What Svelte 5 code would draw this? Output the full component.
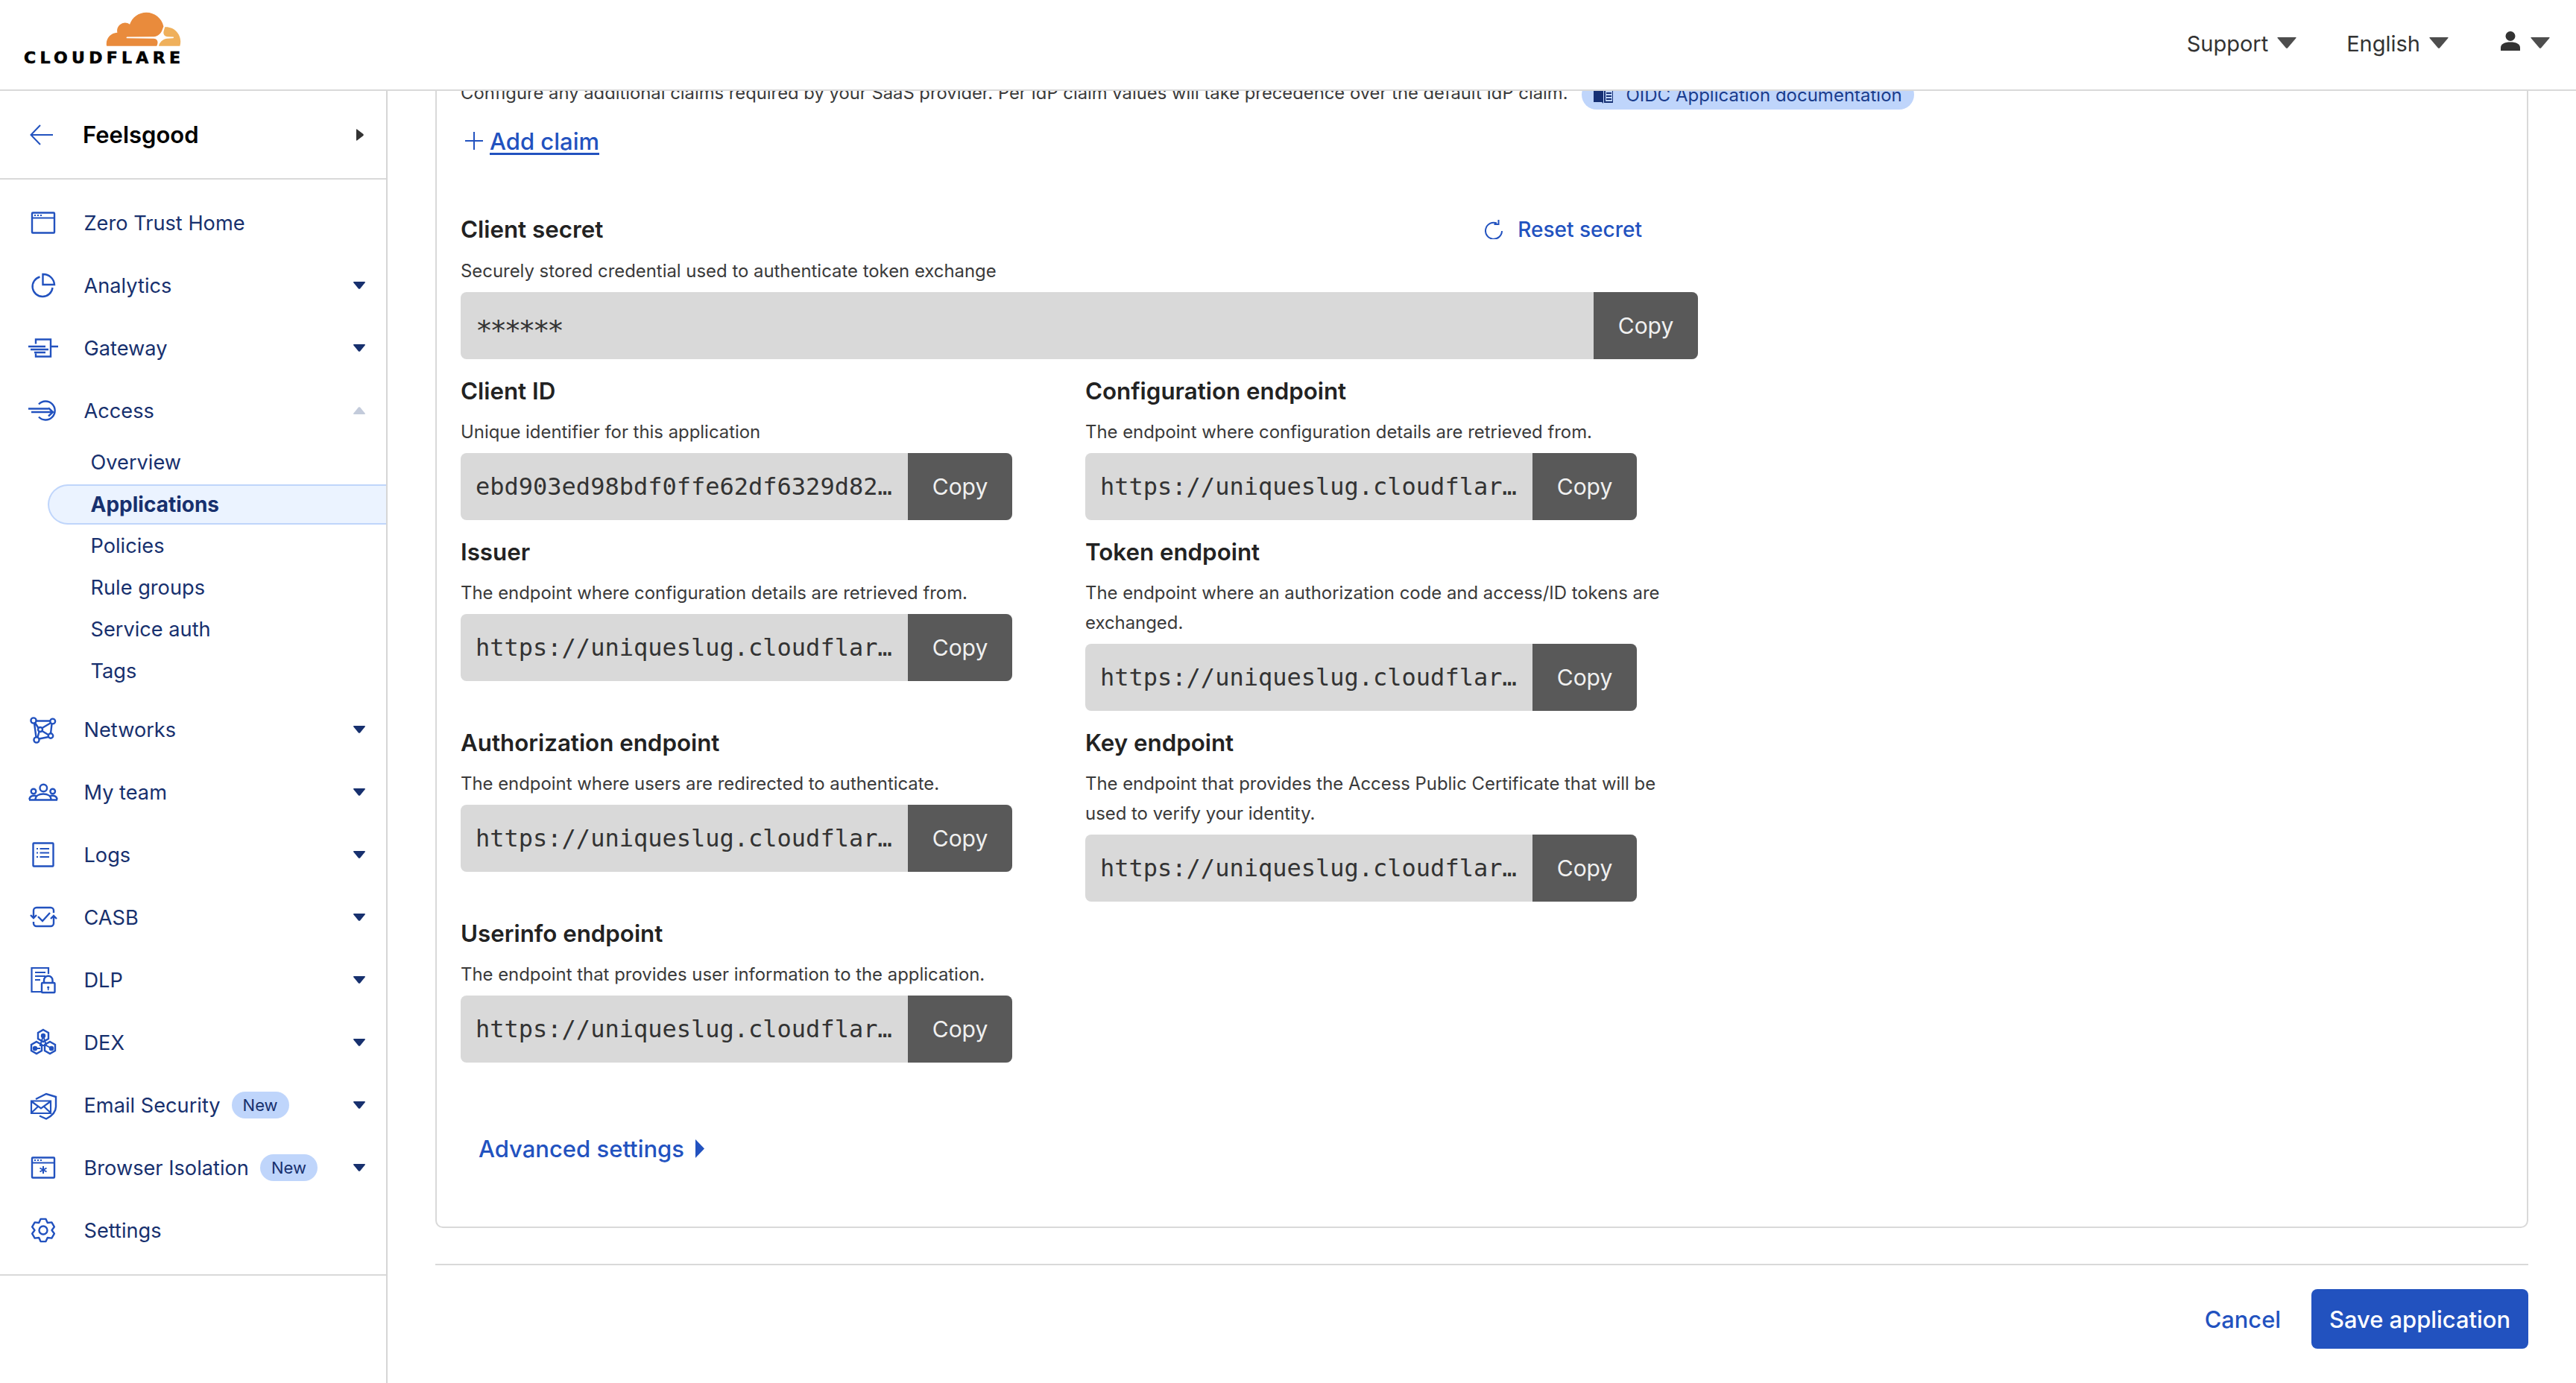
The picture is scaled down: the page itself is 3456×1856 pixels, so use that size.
<script>
  const nav1 = [
    { icon: 'home', label: 'Zero Trust Home' },
    { icon: 'analytics', label: 'Analytics', caret: 'down' },
    { icon: 'gateway', label: 'Gateway', caret: 'down' },
    { icon: 'access', label: 'Access', caret: 'up' }
  ];
  const subs = ['Overview', 'Applications', 'Policies', 'Rule groups', 'Service auth', 'Tags'];
  const nav2 = [
    { icon: 'networks', label: 'Networks', caret: 'down' },
    { icon: 'team', label: 'My team', caret: 'down' },
    { icon: 'logs', label: 'Logs', caret: 'down' },
    { icon: 'casb', label: 'CASB', caret: 'down' },
    { icon: 'dlp', label: 'DLP', caret: 'down' },
    { icon: 'dex', label: 'DEX', caret: 'down' },
    { icon: 'email', label: 'Email Security', caret: 'down', badge: 'New' },
    { icon: 'browser', label: 'Browser Isolation', caret: 'down', badge: 'New' },
    { icon: 'settings', label: 'Settings' }
  ];
  const url = 'https://uniqueslug.cloudflareaccess.com/cdn-cgi/access/sso/oidc/ebd903ed98bdf0ffe62df6329d82';
  const fields = [
    { label: 'Client ID', desc: 'Unique identifier for this application', value: 'ebd903ed98bdf0ffe62df6329d82e1f4a7c05b36d91e2f8c' },
    { label: 'Configuration endpoint', desc: 'The endpoint where configuration details are retrieved from.', value: url },
    { label: 'Issuer', desc: 'The endpoint where configuration details are retrieved from.', value: url },
    { label: 'Token endpoint', desc: 'The endpoint where an authorization code and access/ID tokens are exchanged.', value: url },
    { label: 'Authorization endpoint', desc: 'The endpoint where users are redirected to authenticate.', value: url },
    { label: 'Key endpoint', desc: 'The endpoint that provides the Access Public Certificate that will be used to verify your identity.', value: url },
    { label: 'Userinfo endpoint', desc: 'The endpoint that provides user information to the application.', value: url }
  ];
  function gearPath() {
    const pts = [];
    for (let i = 0; i < 6; i++) {
      const a = (i * 60 * Math.PI) / 180 - Math.PI / 2;
      const d = Math.PI / 180;
      [[11.5, -30], [15.5, -13], [15.5, 13], [11.5, 30]].forEach(([r, o]) => {
        pts.push(`${(20 + r * Math.cos(a + o * d)).toFixed(2)} ${(20 + r * Math.sin(a + o * d)).toFixed(2)}`);
      });
    }
    return 'M' + pts.join(' L') + ' Z';
  }
  const gear = gearPath();
</script>

{#snippet navIcon(name)}
  <svg class="nicon" viewBox="0 0 40 40" width="40" height="40" fill="none" stroke="currentColor" stroke-width="2.4">
    {#if name === 'home'}
      <rect x="5" y="6.5" width="30" height="27" rx="1" />
      <path d="M5 13.5H35M8 10H10M12 10H14M16 10H18" stroke-width="2" />
    {:else if name === 'analytics'}
      <path d="M15.5 8.5A13.5 13.5 0 1 0 32.5 23" />
      <path d="M19.5 5A15 15 0 0 1 35 19H19.5Z" />
    {:else if name === 'gateway'}
      <path d="M10 14.5V8.5H30V31.5H10V27.5M0 18H23M3 22H27M8 26H23M30 18H40" />
    {:else if name === 'access'}
      <path d="M14 11.5A12.5 12.5 0 1 1 14 28.5M0 17.5H27M4 22H33M27 16.5L33 22L27 27.5" />
    {:else if name === 'networks'}
      <path d="M10.5 8.5H29M8 11.5L10.5 30.5M31.5 12.5L30 25.5M14.5 32.5L27 30M9 11L13.5 18M18.5 18L29.5 11.5M18.5 22L27.5 27.5M14.5 23L12.5 30.5" />
      <circle cx="7" cy="8" r="3.6" /><circle cx="32.7" cy="9" r="3.4" /><circle cx="16" cy="20" r="3" /><circle cx="30" cy="28.5" r="3.2" /><circle cx="11" cy="34" r="3.6" />
    {:else if name === 'team'}
      <circle cx="7" cy="19" r="3.3" /><circle cx="20.3" cy="14.5" r="4.8" /><circle cx="32.7" cy="19" r="3.3" />
      <path d="M1 30.5H39M1.5 30C1.5 26 5 24 10.5 25M9.5 30C9.5 25 14 22.5 20 22.5C26 22.5 30.5 25 30.5 30M38.5 30C38.5 26 35 24 29.5 25" />
    {:else if name === 'logs'}
      <rect x="6.5" y="4.5" width="27" height="31" rx="1" />
      <path d="M15.5 12H28M15.5 17.5H28M15.5 23H28M11 12H13M11 17.5H13M11 23H13" stroke-width="2" />
    {:else if name === 'casb'}
      <path d="M7 21V11A4 4 0 0 1 11 7H30A4 4 0 0 1 34 11V14M3 17L7 21L11 17M7 26V28A4 4 0 0 0 11 32H30A4 4 0 0 0 34 28V19M30 22L34 18L38 22M13 19L19 25L29 14" />
    {:else if name === 'dlp'}
      <path d="M17 36H4.5V4H27V12M9 10H23M9 15H23M9 20H16" stroke-width="2.2" />
      <rect x="18" y="24" width="17.5" height="13" rx="1" />
      <path d="M21 24V20.5A5.7 5.7 0 0 1 32.5 20.5V24" />
      <circle cx="26.7" cy="30" r="1.6" fill="currentColor" stroke="none" /><path d="M26.7 30V34" stroke-width="1.6" />
    {:else if name === 'dex'}
      <path d="M20 3L27 7V15L20 19L13 15V7Z" />
      <path d="M11 19L18 23V31L11 35L4 31V23Z" />
      <path d="M29 19L36 23V31L29 35L22 31V23Z" />
      <circle cx="20" cy="11" r="2" fill="currentColor" /><circle cx="9" cy="28" r="2" fill="currentColor" /><circle cx="31" cy="28" r="2" fill="currentColor" />
      <path d="M20 11L16 24H24ZM9 28H16M24 24L31 28" stroke-width="2" />
    {:else if name === 'email'}
      <path d="M10 12L24 5L37 9V22C37 30 31 35 24 38.5L15 34.5" />
      <path d="M4 14.5H30V31H4ZM4 15L17 24.5L30 15M4 30.5L13 22M30 30.5L21 22" stroke-width="2.2" />
    {:else if name === 'browser'}
      <rect x="5" y="6.5" width="30" height="27" rx="1" />
      <path d="M5 13.5H35M8 10H10M12 10H14M16 10H18M20 18V28M15.5 20.5L24.5 25.5M24.5 20.5L15.5 25.5" stroke-width="2" />
    {:else if name === 'settings'}
      <path d={gear} stroke-linejoin="round" />
      <circle cx="20" cy="20" r="5.5" />
    {/if}
  </svg>
{/snippet}

{#snippet caret(dir)}
  <svg class="caret" class:up={dir === 'up'} viewBox="0 0 16 10" width="16" height="10">
    <path d="M0 1Q0 0 1 0H15Q16 0 16 1L9 9.5Q8 10 7 9.5Z" fill="currentColor" />
  </svg>
{/snippet}

{#snippet topCaret()}
  <svg class="tcaret" viewBox="0 0 26 15" width="26" height="15">
    <path d="M1 0H25Q26 0 25.5 1L14 14.5Q13 15 12 14.5L.5 1Q0 0 1 0Z" fill="#4d4d4d" />
  </svg>
{/snippet}

{#snippet field(f)}
  <div class="field">
    <div class="flabel">{f.label}</div>
    <p class="fdesc">{f.desc}</p>
    <div class="copyrow">
      <div class="cvalue">{f.value}</div>
      <button class="cbtn">Copy</button>
    </div>
  </div>
{/snippet}

<div class="app">
  <header class="top">
    <div class="logo">
      <svg class="cloud" viewBox="0 6.4 24 11.1" width="101" height="46">
        <path fill="#e98b3c" d="M16.5088 16.8447c.1475-.5068.0908-.9707-.1553-1.3154-.2246-.3164-.6045-.499-1.0615-.5205l-8.6592-.1123a.1559.1559 0 0 1-.1333-.0713c-.0283-.042-.0351-.0986-.021-.1553.0278-.084.1123-.1484.2036-.1562l8.7359-.1123c1.0351-.0489 2.1601-.8868 2.5537-1.9136l.499-1.3013c.0215-.0561.0293-.1128.0147-.168-.5625-2.5463-2.835-4.4453-5.5499-4.4453-2.5039 0-4.6284 1.6177-5.3876 3.8614-.4927-.3658-1.1187-.5625-1.794-.499-1.2026.119-2.1665 1.083-2.2861 2.2856-.0283.31-.0069.6128.0635.894C1.5683 13.171 0 14.7754 0 16.752c0 .1748.0142.3515.0352.5273.0141.083.0844.1475.1689.1475h15.9814c.0909 0 .1758-.0645.2032-.1553l.12-.4268z"/>
        <path fill="#efb05b" d="M19.2656 11.2813c-.0771 0-.1611 0-.2383.0112-.0566 0-.1054.0415-.127.0976l-.3378 1.1744c-.1475.5068-.0918.9707.1543 1.3164.2256.3164.6055.498 1.0625.5195l1.8437.1133c.0557 0 .1055.0263.1329.0703.0283.043.0351.1074.0214.1562-.0283.084-.1132.1485-.204.1553l-1.921.1123c-1.041.0488-2.1582.8867-2.5527 1.914l-.1406.3585c-.0283.0713.0215.1416.0986.1416h6.5977c.0771 0 .1474-.0489.169-.126.1122-.4082.1757-.837.1757-1.2803 0-2.6025-2.125-4.727-4.7344-4.727"/>
      </svg>
      <div class="wordmark">CLOUDFLARE</div>
    </div>
    <nav class="tnav">
      <span class="titem">Support {@render topCaret()}</span>
      <span class="titem">English {@render topCaret()}</span>
      <span class="titem user">
        <svg class="person" viewBox="0 0 26 26" width="26" height="26"><circle cx="13" cy="6.5" r="6.5" fill="#333"/><path d="M0 26V22C0 17 5 14.5 13 14.5S26 17 26 22V26Z" fill="#333"/></svg>
        {@render topCaret()}
      </span>
    </nav>
  </header>

  <div class="body">
    <aside class="side">
      <div class="acct">
        <svg class="back" viewBox="0 0 32 28" width="32" height="28" fill="none" stroke="#2252bf" stroke-width="2"><path d="M31 14H2M14 1L1.5 14L14 27"/></svg>
        <span class="acctname">Feelsgood</span>
        <svg viewBox="0 0 10 16" width="10" height="16"><path d="M0 1Q0 0 1 .5L9.5 7Q10 8 9.5 9L1 15.5Q0 16 0 15Z" fill="#333"/></svg>
      </div>
      <div class="nav">
        {#each nav1 as it}
          <div class="nrow">
            {@render navIcon(it.icon)}
            <span class="nlabel">{it.label}</span>
            {#if it.caret}{@render caret(it.caret)}{/if}
          </div>
        {/each}
        <div class="subs">
          {#each subs as s}
            <div class="sub" class:active={s === 'Applications'}>{s}</div>
          {/each}
        </div>
        {#each nav2 as it}
          <div class="nrow">
            {@render navIcon(it.icon)}
            <span class="nlabel">{it.label}</span>
            {#if it.badge}<span class="badge">{it.badge}</span>{/if}
            {#if it.caret}{@render caret(it.caret)}{/if}
          </div>
        {/each}
      </div>
    </aside>

    <main class="main">
      <section class="card">
        <div class="claims">
          <span class="claimtext">Configure any additional claims required by your SaaS provider. Per IdP claim values will take precedence over the default IdP claim.</span>
          <span class="docpill">
            <svg viewBox="0 0 26 24" width="26" height="24">
              <path d="M0 1H13V24L11 22H0Z" fill="#163074"/>
              <path d="M15 1H26V22H15ZM17 6H24M17 10H24M17 14H24M17 18H24" fill="none" stroke="#163074" stroke-width="2"/>
            </svg>
            OIDC Application documentation
          </span>
        </div>
        <div class="addclaim">
          <svg viewBox="0 0 24 24" width="24" height="24" fill="none" stroke="#2252bf" stroke-width="2"><path d="M12 0V24M0 12H24"/></svg>
          <a href="#add">Add claim</a>
        </div>

        <div class="field secret">
          <div class="secrethead">
            <div class="flabel">Client secret</div>
            <span class="reset">
              <svg viewBox="0 0 24 26" width="24" height="26" fill="none" stroke="#2252bf" stroke-width="2"><path d="M16 4.5A11 11 0 1 0 23 15M18.5 0V6H12.5"/></svg>
              Reset secret
            </span>
          </div>
          <p class="fdesc">Securely stored credential used to authenticate token exchange</p>
          <div class="copyrow">
            <div class="cvalue masked">******</div>
            <button class="cbtn">Copy</button>
          </div>
        </div>

        <div class="grid">
          {#each fields as f}
            {@render field(f)}
          {/each}
        </div>

        <div class="advanced">
          Advanced settings
          <svg viewBox="0 0 12 25" width="12" height="25"><path d="M0 0L12 12.5L0 25Z" fill="#2252bf"/></svg>
        </div>
      </section>

      <footer class="foot">
        <a class="cancel" href="#cancel">Cancel</a>
        <button class="save">Save application</button>
      </footer>
    </main>
  </div>
</div>

<style>
  :global(body) { margin: 0; background: #fff; }
  .app { width: 3456px; height: 1856px; overflow: hidden; font-family: Inter, "Noto Sans", sans-serif; color: #222; display: flex; flex-direction: column; }
  .top { flex: none; height: 120px; border-bottom: 2px solid #d9d9d9; display: flex; justify-content: space-between; align-items: center; padding: 0 35px 0 32px; background: #fff; position: relative; z-index: 2; }
  .logo { width: 212px; height: 120px; position: relative; display: flex; flex-direction: column; align-items: flex-end; padding-top: 16px; box-sizing: border-box; }
  .cloud { display: block; margin-right: 1px; }
  .wordmark { align-self: flex-start; margin-top: 3px; font: 700 22px/26px "DejaVu Sans", sans-serif; letter-spacing: 5.3px; color: #000; -webkit-text-stroke: .6px #000; white-space: nowrap; }
  .tnav { display: flex; align-items: center; font-size: 29px; color: #333; margin-top: -2px; }
  .titem { display: flex; align-items: center; gap: 12px; margin-left: 67px; line-height: 40px; }
  .tcaret { display: block; margin-top: -4px; }
  .user { gap: 14px; margin-left: 70px; }
  .person { display: block; margin-bottom: 8px; }

  .body { flex: 1; display: flex; min-height: 0; }
  .side { flex: none; width: 520px; box-sizing: border-box; border-right: 2px solid #d6d6d6; }
  .acct { height: 119px; box-sizing: border-box; border-bottom: 2px solid #d9d9d9; display: flex; align-items: center; padding: 0 30px 0 40px; }
  .back { display: block; }
  .acctname { flex: 1; margin-left: 39px; font-size: 31px; font-weight: 600; color: #000; }
  .nav { padding: 16px 0 17px; border-bottom: 2px solid #d9d9d9; }
  .nrow { height: 84px; display: flex; align-items: center; padding: 0 28px 0 38px; color: #2252bf; }
  .nicon { flex: none; display: block; }
  .nlabel { margin-left: 34.5px; font-size: 27.2px; color: #17306e; white-space: nowrap; }
  .caret { margin-left: auto; color: #17306e; display: block; flex: none; }
  .caret.up { color: #c3cbdb; transform: rotate(180deg); }
  .badge { margin-left: 15px; height: 36px; padding: 0 15px; border-radius: 18px; background: #bfd5fb; color: #17306e; font-size: 22px; line-height: 36px; }
  .subs { padding-bottom: 8px; }
  .sub { height: 56px; box-sizing: border-box; padding-left: 121.5px; line-height: 56px; font-size: 27.2px; color: #17306e; }
  .sub.active { margin: 1px 0 1px 64px; height: 54px; padding-left: 55.5px; line-height: 50px; border: 2px solid #bfd5fb; border-right: 0; border-radius: 27px 0 0 27px; background: #ebf3ff; font-size: 28px; font-weight: 700; }

  .main { flex: 1; min-width: 0; overflow: hidden; padding: 0 64px; box-sizing: border-box; }
  .card { margin-top: -41px; border: 2px solid #d9d9d9; border-radius: 10px; padding: 22px 32px 79px; height: 1567px; box-sizing: border-box; }
  .claims { display: flex; align-items: flex-start; height: 40px; white-space: nowrap; }
  .claimtext { font-size: 23.8px; line-height: 40px; color: #3a3a3a; }
  .docpill { display: flex; align-items: center; gap: 18px; margin: 2px 0 0 18px; height: 40px; padding: 0 16px; border-radius: 20px; background: #bfd5fb; color: #1a3c8c; font-size: 24px; box-sizing: border-box; }
  .docpill svg { display: block; }
  .addclaim { display: flex; align-items: center; gap: 9px; margin: 20px 0 0 6px; height: 48px; font-size: 31px; font-weight: 500; }
  .addclaim svg { display: block; }
  .addclaim a { color: #2252bf; text-decoration: underline; text-underline-offset: 4px; }
  .field { margin-bottom: 19px; min-width: 0; }
  .secret { margin-top: 73px; width: 1660px; }
  .secrethead { display: flex; justify-content: space-between; align-items: center; margin-top: -2px; padding-bottom: 1px; }
  .flabel { font-size: 31.3px; font-weight: 600; line-height: 48px; color: #222; }
  .reset { display: flex; align-items: center; gap: 20px; margin-right: 75px; font-size: 28px; font-weight: 500; color: #2252bf; }
  .reset svg { display: block; }
  .fdesc { margin: 11px 0 8px; font-size: 23.9px; line-height: 40px; color: #3a3a3a; }
  .copyrow { display: flex; height: 90px; border-radius: 8px; overflow: hidden; background: #d9d9d9; }
  .grid .copyrow { width: 740px; }
  .cvalue { flex: 1; min-width: 0; padding: 0 20px; font: 32px/90px "DejaVu Sans Mono", monospace; color: #333; white-space: nowrap; overflow: hidden; text-overflow: ellipsis; }
  .masked { font-size: 38px; letter-spacing: -3.67px; line-height: 104px; }
  .cbtn { flex: none; width: 140px; height: 90px; border: 0; padding: 0; background: #595959; color: #f0f0f0; font: 30px Inter, sans-serif; }
  .grid { display: grid; grid-template-columns: 740px 790px; column-gap: 98px; align-items: start; }
  .advanced { display: flex; align-items: center; gap: 15px; margin: 72px 0 0 24px; height: 48px; font-size: 31px; font-weight: 500; color: #2252bf; }
  .advanced svg { display: block; }
  .foot { margin-top: 48px; border-top: 2px solid #d9d9d9; padding-top: 32px; display: flex; justify-content: flex-end; align-items: center; gap: 41px; }
  .cancel { font-size: 30.8px; font-weight: 500; color: #2252bf; text-decoration: none; }
  .save { width: 291px; height: 80px; border: 0; border-radius: 8px; background: #2252bf; color: #fff; font: 500 30.9px Inter, sans-serif; padding: 0; }
</style>
